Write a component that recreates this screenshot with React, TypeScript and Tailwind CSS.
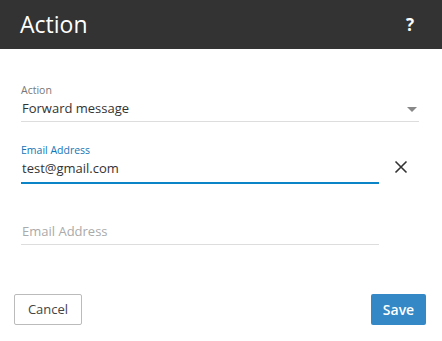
import React from "react";

export default function App() {
  return (
    <div className="h-[341px] w-[442px] bg-white font-['Open_Sans',sans-serif] text-[#333]">
      {/* HEADER */}
      <div className="flex h-[49px] items-center justify-between bg-[#333333] pl-[20px] pr-[28px]">
        <h1 className="text-[23px] leading-none text-white">Action</h1>
        <span className="text-[17px] font-bold leading-none text-white">?</span>
      </div>

      {/* FORM */}
      <div className="px-[21px] pt-[34px]">
        <div className="w-[398px] border-b border-[#dddddd] pb-[3px]">
          <label className="block text-[10.5px] leading-[14px] text-[#777]">Action</label>
          <div className="mt-[1px] flex items-center justify-between pl-[1px]">
            <span className="text-[13px] leading-[20px]">Forward message</span>
            <span className="mr-[2px] mt-[2px] h-0 w-0 border-x-[5px] border-t-[5px] border-x-transparent border-t-[#888]" />
          </div>
        </div>

        <div className="mt-[21px] flex items-end">
          <div className="w-[358px] border-b-2 border-[#0a84c6] pb-[4px]">
            <label className="block text-[10.5px] leading-[14px] text-[#1476b5]">Email Address</label>
            <div className="mt-[1px] pl-[1px] text-[13px] leading-[20px]">test@gmail.com</div>
          </div>
          <button className="mb-[10px] ml-[15px] flex h-[14px] w-[14px] items-center justify-center text-[#333]">
            <svg width="14" height="14" viewBox="0 0 14 14" fill="none" stroke="currentColor" strokeWidth="1.6">
              <path d="M1.5 1.5l11 11M12.5 1.5l-11 11" />
            </svg>
          </button>
        </div>

        <div className="mt-[37px] w-[358px] border-b border-[#dddddd] pb-[3px]">
          <span className="block pl-[1px] text-[13px] leading-[20px] text-[#aaa]">Email Address</span>
        </div>
      </div>

      {/* FOOTER */}
      <div className="mt-[49px] flex items-center justify-between pl-[14px] pr-[16px]">
        <button className="h-[31px] w-[68px] rounded-[2px] border border-[#bbbbbb] bg-white text-[13px] text-[#444]">
          Cancel
        </button>
        <button className="h-[31px] w-[55px] rounded-[2px] bg-[#3488c6] text-[14px] font-semibold text-white">
          Save
        </button>
      </div>
    </div>
  );
}
